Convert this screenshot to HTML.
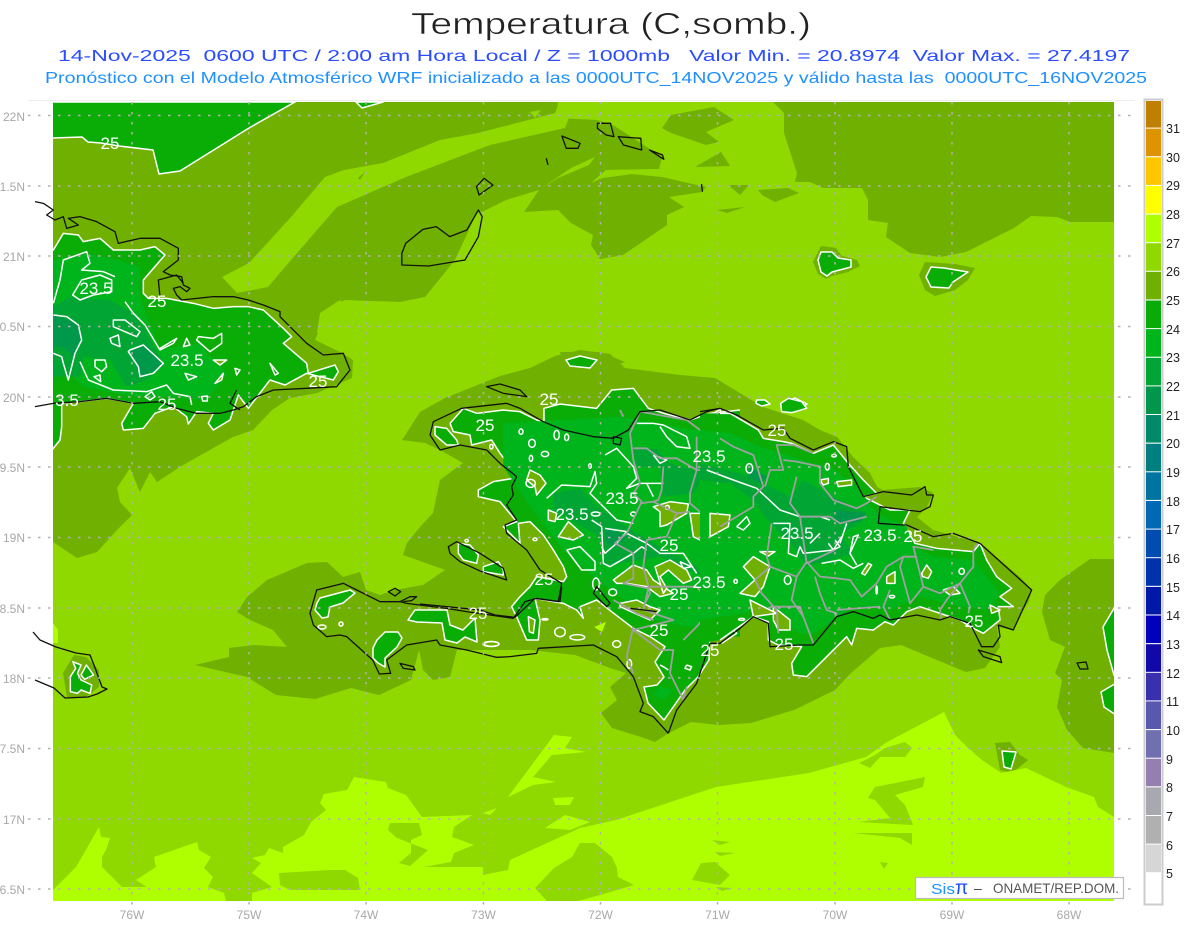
<!DOCTYPE html>
<html><head><meta charset="utf-8"><title>Temperatura</title>
<style>
html,body{margin:0;padding:0;background:#fff;width:1200px;height:927px;overflow:hidden}
svg{display:block;position:absolute;left:0;top:0}
svg *{vector-effect:non-scaling-stroke}
text{font-family:"Liberation Sans",sans-serif}
.w polyline,.w polygon,.w ellipse{stroke:#fff;stroke-width:1.5;stroke-linejoin:round;fill:none}
.f polygon{stroke:none}
.h polygon{fill:#70b000;stroke:none}
.l polygon{fill:#8fd800;stroke:none}
.y polygon{fill:#b0ff00;stroke:none}
.g polygon{fill:#09ad06;stroke:#fff;stroke-width:1.5;stroke-linejoin:round}
.o polygon{fill:#70b000;stroke:#fff;stroke-width:1.5;stroke-linejoin:round}
.b polyline{fill:none;stroke:#a0a0a0;stroke-width:1.8;stroke-linejoin:round}
.k polyline,.k polygon{fill:none;stroke:#111;stroke-width:1.3;stroke-linejoin:round}
.t text{fill:#fff;font-size:17px;text-anchor:middle}
.la text{fill:#a8a8a8;font-size:12px;text-anchor:end}
.lo text{fill:#a8a8a8;font-size:12px;text-anchor:middle}
.n text{fill:#222;font-size:12.5px}
</style></head><body>
<svg width="1200" height="927" viewBox="0 0 1200 927" xmlns="http://www.w3.org/2000/svg">
<defs><clipPath id="m"><rect x="53" y="102" width="1061" height="799"/></clipPath></defs>

<text x="411" y="34" font-size="31" fill="#222" stroke="#fff" stroke-width=".5" textLength="400" lengthAdjust="spacingAndGlyphs">Temperatura (C,somb.)</text>
<text x="58" y="61" font-size="16" fill="#2b4cff" textLength="1072" lengthAdjust="spacingAndGlyphs" xml:space="preserve">14-Nov-2025  0600 UTC / 2:00 am Hora Local / Z = 1000mb   Valor Min. = 20.8974  Valor Max. = 27.4197</text>
<text x="45" y="83" font-size="16" fill="#1e90ff" textLength="1102" lengthAdjust="spacingAndGlyphs" xml:space="preserve">Pronóstico con el Modelo Atmosférico WRF inicializado a las 0000UTC_14NOV2025 y válido hasta las  0000UTC_16NOV2025</text>

<line x1="28" y1="100.5" x2="1135" y2="100.5" stroke="#eee"/>

<g clip-path="url(#m)">
<rect x="53" y="102" width="1061" height="799" fill="#8fd800"/>

<!-- 25-26 band -->
<g class="h">
<polygon points="53,102 558,102 556,118 597,120 613,125 662,157 659,169 606,170 591,183 602,178 632,174 662,177 706,187 702,192 669,197 684,207 667,215 667,225 623,255 600,259 591,245 593,235 571,223 558,210 524,212 539,190 506,200 482,212 478,210 455,260 425,297 400,302 345,300 322,312 318,333 315,340 340,352 353,360 352,378 317,393 290,398 272,410 253,430 233,437 183,465 157,482 150,472 140,492 130,468 117,488 120,502 132,515 117,530 97,552 77,558 53,542"/>
<polygon points="773,102 784,113 784,133 797,173 795,182 810,182 823,188 862,188 868,200 868,220 888,223 886,237 910,253 940,257 966,252 1014,228 1031,216 1057,217 1070,222 1114,222 1114,102"/>
<polygon points="671,115 714,107 734,120 706,132 719,142 706,145 671,133 662,128"/>
<polygon points="695,167 721,152 730,166"/>
<polygon points="758,190 788,188 799,193 775,202 762,195"/>
<polygon points="728,185 749,185 740,195"/>
<polygon points="717,210 745,207 727,213"/>
<!-- Hispaniola halo -->
<polygon points="402,440 420,412 445,398 470,388 500,376 530,368 555,356 580,350 610,354 625,368 680,375 715,378 740,393 763,407 803,420 820,430 837,437 853,457 870,473 877,487 883,490 920,487 933,493 927,507 917,517 933,530 980,543 1020,577 1032,590 1028,603 1017,620 1013,630 997,627 1000,647 985,668 966,672 937,660 901,645 880,648 851,673 835,690 794,710 751,723 719,725 691,722 669,733 655,742 641,737 612,728 601,713 617,700 610,687 626,673 610,668 575,655 530,650 480,650 457,650 455,657 450,677 433,680 423,670 419,650 411,680 379,695 351,688 315,699 276,695 247,677 195,665 229,657 229,648 254,645 287,647 273,630 250,620 237,612 247,597 267,580 307,563 327,562 343,577 360,572 366,590 380,595 395,590 423,585 445,570 437,567 403,555 407,543 420,527 433,513 440,480 463,463 440,450 425,443"/>
<!-- east blob -->
<polygon points="1114,559 1090,559 1060,580 1045,595 1042,612 1050,640 1065,647 1055,673 1062,680 1057,707 1067,730 1083,748 1114,753"/>
<!-- Jamaica halo -->
<polygon points="74,655 63,673 67,697 86,697 99,687 99,670 86,657"/>
<!-- island halos -->
<polygon points="821,246 836,248 842,256 857,260 860,266 848,272 832,276 826,279 818,274 813,262"/>
<polygon points="925,262 955,264 975,268 968,280 955,290 935,296 925,290 919,275"/>
<polygon points="560,352 600,352 625,362 600,372 565,370"/>
<polygon points="995,743 1010,742 1020,755 1028,760 1012,773 1000,770"/>
</g>

<!-- light strips in dark -->
<g class="l">
<polygon points="222,277 249,263 291,217 325,177 344,170 383,163 440,140 478,133 555,113 560,102 575,102 565,128 490,145 406,177 337,207 291,260 268,287 237,293"/>
<polygon points="539,190 571,168 595,157 589,165 558,178"/>
<polygon points="530,112 541,110 535,118"/>
<polygon points="591,183 606,170 660,169 662,177 632,174 602,178"/>
<polygon points="340,300 320,313 317,333 338,326 350,310"/>
</g>
<g class="h">
<polygon points="358,178 365,172 360,180"/>
<polygon points="308,245 318,240 312,250"/>
</g>

<!-- lime -->
<g class="y">
<polygon points="53,890 76,867 99,827 101,837 110,838 106,850 102,857 102,867 122,887 147,887 136,880 156,867 154,857 197,842 199,850 211,857 204,868 213,877 208,887 224,893 226,901 53,901"/>
<polygon points="252,901 252,893 272,887 252,873 261,863 252,858 265,855 269,848 283,853 283,847 304,835 311,822 326,810 320,803 324,794 347,790 354,777 386,782 388,788 406,795 422,817 472,815 454,827 452,837 474,845 454,853 451,862 424,867 483,867 483,875 508,870 510,860 547,843 580,828 616,820 716,787 809,773 866,757 887,742 944,712 955,735 967,747 982,760 1001,773 1026,768 1066,787 1094,797 1098,807 1114,817 1114,901"/>
<polygon points="554,735 572,737 565,748 586,752 552,755 533,777 556,782 533,785 508,797"/>
<polygon points="553,798 574,797 570,805 555,805"/>
<polygon points="483,813 497,808 490,815"/>
<polygon points="545,828 565,815 590,822 570,830"/>
<polygon points="53,623 58,630 58,643 53,643"/>
<polygon points="594,627 606,622 602,632"/>
</g>
<g class="l">
<polygon points="399,863 411,853 411,840 422,835 419,823 390,823 388,830 397,838 428,850 410,866"/>
<polygon points="279,873 330,870 345,870 358,878 360,890 290,890 280,885"/>
<polygon points="580,843 595,843 612,857 617,868 618,877 634,885 600,895 578,901 547,901 535,888 554,868 572,857"/>
<polygon points="875,787 925,777 923,787 895,795 905,805 912,822 913,825 858,822 890,818 875,800 868,798"/>
<polygon points="853,833 912,833 912,845 900,838"/>
<polygon points="859,763 875,755 885,748 905,742 912,748 905,757 880,757 870,768"/>
<polygon points="712,840 730,842 720,845"/>
<polygon points="715,852 735,853 720,856"/>
<polygon points="701,863 715,862 730,875 720,885 692,880"/>
<polygon points="716,887 732,888 722,891"/>
<polygon points="880,862 888,863 884,869"/>
</g>

<!-- 25 contour fills: top-left -->
<g class="g">
<polygon points="40,102 40,138 53,138 82,137 88,142 101,143 119,146 153,150 159,174 180,171 249,128 295,102"/>
<polygon points="356,102 362,108 383,102"/>
<polygon points="821,252 832,252 838,258 851,260 851,267 832,272 827,276 821,272 818,260"/>
<polygon points="931,267 944,268 968,272 953,282 949,288 931,287 926,277"/>
<polygon points="566,360 580,356 597,360 590,368 570,366"/>
<polygon points="783,403 795,398 807,404 795,412"/>
<polygon points="1002,751 1016,752 1011,769 1004,767"/>
<polygon points="1118,600 1113,610 1103,627 1107,650 1114,675 1118,680"/>
<polygon points="1118,682 1101,692 1104,707 1113,713 1118,716"/>
<!-- southern peninsula of Haiti -->
<polygon points="317,603 320,598 350,590 355,593 343,603 330,607 328,617 322,618 315,610"/>
<polygon points="373,648 377,640 385,632 398,632 402,638 397,647 385,658 385,667 378,663 373,658"/>
<polygon points="408,620 415,610 447,610 450,625 463,630 475,618 477,642 465,637 457,643 445,640 442,623 417,622"/>
</g>
<g class="w">
<ellipse cx="322" cy="627" rx="4" ry="2"/><ellipse cx="341" cy="624" rx="2" ry="2"/>
<ellipse cx="491" cy="644" rx="8" ry="2.5"/>
</g>

<!-- Cuba -->
<g transform="translate(0 200) scale(.33333)">
<g class="g"><polygon points="120,150 160,150 190,100 235,105 250,125 300,115 340,150 420,150 465,140 495,165 430,240 430,280 445,295 500,295 580,310 640,325 700,320 745,320 790,330 850,385 875,410 850,430 920,490 925,520 1005,495 1015,515 1000,540 920,520 855,555 810,540 745,625 715,585 690,660 640,690 625,670 640,640 590,635 565,672 560,650 520,620 465,640 430,685 370,690 365,670 400,610 320,595 240,605 185,610 185,680 180,720 140,770 120,770"/></g>
<g class="f">
<polygon fill="#00b41c" points="160,180 260,160 350,180 420,200 420,290 440,350 480,450 600,430 640,480 680,520 620,600 500,590 400,590 250,560 190,500 160,450"/>
<polygon fill="#00a534" points="160,320 210,290 330,300 400,340 430,380 490,490 440,540 380,560 330,480 250,470 240,530 160,530"/>
<polygon fill="#00984a" points="160,345 230,370 245,410 220,470 190,440 160,440"/>
<polygon fill="#00984a" points="390,450 440,435 490,500 420,530"/>
</g>
<g class="w">
<polygon points="245,240 300,225 335,240 335,275 280,285 240,300 218,285"/>
<polyline points="160,310 180,240 190,180 260,155 270,190 245,210 310,215 345,230"/>
<polyline points="160,345 200,350 235,375 245,420 225,460 205,540 190,490 185,470 160,460"/>
<polygon points="340,360 375,360 420,395 410,410 340,380"/>
<polygon points="330,415 355,405 360,440 335,430"/>
<polygon points="390,450 430,435 490,490 460,520 420,530 415,500 385,455"/>
<polygon points="285,480 315,480 320,500 305,515 285,500"/>
<polygon points="560,415 570,435 550,440"/>
<polygon points="595,410 640,415 665,400 665,430 630,455 590,420"/>
<polygon points="640,480 680,480 660,495" style="fill:#70b000"/>
<polygon points="555,520 590,530 565,540"/>
<polygon points="645,550 670,520 665,540" style="fill:#70b000"/>
<polygon points="705,505 720,510 710,525"/>
<polygon points="282,530 300,525 302,545"/>
<polyline points="240,485 265,540 340,570 440,575 500,555 520,580 570,590 575,615"/>
<polyline points="375,305 400,340 435,375 480,450 520,430 530,415 480,445"/>
<polygon points="435,590 455,575 465,590 450,600"/>
<polygon points="605,590 622,588 622,603 608,603"/>
<polygon points="810,490 835,520 825,525"/>
</g>
</g>

<!-- Jamaica -->
<g transform="translate(40 640) scale(.357 .33333)">
<g class="g"><polygon points="92,65 100,85 85,110 85,155 105,160 115,150 140,160 145,135 115,120 105,100 115,75"/></g>
<g class="g"><polygon points="130,75 150,105 125,118 115,105"/></g>
</g>

<!-- Hispaniola west -->
<g transform="translate(420 380) scale(.33333)">
<polygon fill="#09ad06" stroke="none" points="90,130 130,85 170,100 250,90 300,95 350,120 372,125 372,85 420,72 530,85 575,30 640,25 685,85 730,100 810,120 870,100 960,90 960,770 870,770 867,840 834,891 795,930 768,969 732,1020 684,969 672,921 711,915 732,891 705,846 735,800 690,770 640,745 575,695 530,660 480,680 490,715 470,690 430,670 345,655 360,720 355,780 320,780 290,710 275,680 300,650 330,620 350,590 430,605 440,590 430,560 400,510 370,465 330,425 295,430 300,490 260,450 250,440 290,425 240,365 175,350 175,330 220,305 280,295 295,280 320,300 345,325 350,345 380,310 360,280 335,258 275,265 240,220 215,180 155,195 150,165 100,155"/>
<g class="w">
<polyline points="90,130 130,85 170,100 250,90 300,95 350,120 372,125 372,85 420,72 530,85 575,30 640,25 685,85 730,100 810,120 870,100 960,90"/>
<polyline points="870,770 867,840 834,891 795,930 768,969 732,1020 684,969 672,921 711,915 732,891 705,846 735,800 690,770 640,745 575,695 530,660 480,680 490,715 470,690 430,670 345,655 360,720 355,780 320,780 290,710 275,680 300,650 330,620 350,590 430,605 440,590 430,560 400,510 370,465 330,425 295,430 300,490 260,450 250,440 290,425 240,365 175,350 175,330 220,305 280,295 295,280 320,300 345,325 350,345 380,310 360,280 335,258 275,265 240,220 215,180 155,195 150,165 100,155 90,130"/>
</g>
<g class="g">
<polygon points="45,140 80,145 110,180 115,195 80,195 45,165"/>
<polygon points="115,490 150,495 175,525 170,550 130,540 115,520"/>
<polygon points="190,560 235,545 250,570 250,585 190,575"/>
</g>
<g class="f">
<polygon fill="#00b41c" points="250,130 600,110 820,150 960,150 960,730 800,740 700,720 600,650 530,600 430,510 330,380 250,260"/>
<polygon fill="#00a534" points="400,340 480,325 530,380 620,440 720,500 830,560 860,590 800,570 720,530 650,540 555,560 540,470 470,430 400,390"/>
<polygon fill="#00a534" points="640,210 710,205 750,250 860,280 820,340 730,350 720,260 650,260"/>
<polygon fill="#00984a" points="555,440 620,470 585,500 560,490"/>
<polygon fill="#00b41c" points="760,930 730,960 700,945 720,920"/>
</g>
<g class="o">
<polygon points="415,470 445,425 490,465 460,480"/>
<polygon points="385,390 410,400 405,425 385,420"/>
<polygon points="700,380 750,365 805,372 800,400 740,435 720,440 720,395"/>
<polygon points="810,400 860,400 890,440 880,470 860,490 820,470"/>
<polygon points="580,600 640,555 680,570 700,600 760,640 720,650 680,620 620,610 590,610"/>
<polygon points="705,560 750,540 800,570 815,600 790,610 745,570 720,590 740,625 730,640"/>
<polygon points="600,670 650,660 690,680 720,690 690,720 600,680"/>
<polygon points="330,270 360,285 378,310 350,345 345,320 320,300"/>
<polygon points="325,710 345,720 340,760 328,755"/>
</g>
<g class="w">
<polyline points="380,355 425,315 510,320 525,275 530,310 510,340 590,420 640,430"/>
<polyline points="555,225 590,205 640,260 650,295 620,325 660,310 680,310 730,310"/>
<polyline points="650,130 700,130 730,135 760,150 800,170 810,205 770,200 740,170 720,140"/>
<polyline points="515,420 545,440 550,550 570,560 640,520 665,500 680,510"/>
<polyline points="555,445 620,455 590,490 555,520 545,500"/>
<polyline points="620,460 680,490 720,520 790,520 830,580"/>
<polyline points="440,510 480,500 525,545 525,570 485,570 440,510"/>
<polyline points="700,225 740,240 720,250 700,225"/>
<polyline points="880,100 900,88 905,105 885,115 880,100"/>
<polyline points="700,350 680,310"/>
<polyline points="905,560 920,640 900,680"/>
<polyline points="870,510 900,530"/>
<polyline points="780,545 815,560 790,565 780,545"/>
<polyline points="890,720 930,740 950,760 905,790"/>
<polyline points="720,855 730,860 745,870"/>
<polyline points="800,855 815,860 810,870 795,865 800,855"/>
<ellipse cx="303" cy="155" rx="6" ry="8"/><ellipse cx="410" cy="165" rx="8" ry="14"/><ellipse cx="440" cy="172" rx="6" ry="10"/>
<ellipse cx="336" cy="190" rx="10" ry="12"/><ellipse cx="375" cy="222" rx="11" ry="8"/><ellipse cx="333" cy="235" rx="5" ry="9"/>
<ellipse cx="214" cy="200" rx="5" ry="7"/><ellipse cx="332" cy="310" rx="14" ry="12"/><ellipse cx="640" cy="402" rx="8" ry="6"/>
<ellipse cx="742" cy="382" rx="6" ry="6"/><ellipse cx="420" cy="756" rx="16" ry="14"/><ellipse cx="472" cy="772" rx="22" ry="8"/>
<ellipse cx="590" cy="792" rx="12" ry="10"/><ellipse cx="215" cy="792" rx="22" ry="7"/><ellipse cx="345" cy="478" rx="6" ry="4"/>
<ellipse cx="140" cy="482" rx="5" ry="4"/><ellipse cx="527" cy="402" rx="13" ry="6"/><ellipse cx="578" cy="637" rx="12" ry="10"/>
<ellipse cx="528" cy="612" rx="10" ry="18"/><ellipse cx="628" cy="852" rx="7" ry="13"/><ellipse cx="878" cy="320" rx="6" ry="5"/>
<ellipse cx="510" cy="258" rx="4" ry="7"/><ellipse cx="375" cy="718" rx="9" ry="2"/>
</g>
<g class="b">
<polyline points="660,95 630,160 640,240 660,310 640,340 665,365 620,460 585,490 640,520 640,595 610,610 685,625 670,690"/>
<polyline points="640,740 620,830 640,880"/>
<polyline points="640,205 680,205 720,235 770,235 830,270 870,270 930,240"/>
<polyline points="730,260 725,330 715,360 700,365 660,370"/>
<polyline points="830,170 830,270 810,340 810,370 880,430 890,470 960,470"/>
<polyline points="700,365 770,400 810,395"/>
<polyline points="770,400 740,470 680,480 670,560 690,640 670,680"/>
<polyline points="670,690 760,720 640,750 720,810 760,810 750,880"/>
<polyline points="880,680 830,740 790,780"/>
<polyline points="880,680 900,620 890,560 930,480"/>
<polyline points="880,680 830,620 690,620"/>
<polyline points="930,240 930,430 960,440"/>
<polyline points="660,95 800,120 840,150 960,110"/>
<polyline points="600,90 610,110"/>
<polyline points="580,660 650,700 700,720"/>
<polyline points="750,880 790,960 800,920"/>
</g>
</g>

<!-- Hispaniola east -->
<g transform="translate(720 380) scale(.33333)">
<polygon fill="#09ad06" stroke="none" points="-60,100 30,100 115,150 130,175 190,185 215,190 280,220 340,195 385,250 430,300 470,340 430,350 510,390 570,390 550,430 585,490 650,505 760,515 780,490 800,540 830,590 875,625 840,650 880,680 835,680 840,720 790,760 750,740 720,720 600,680 560,695 520,735 495,725 460,750 410,745 395,795 380,770 330,820 260,890 220,885 215,850 245,800 175,795 145,780 145,725 100,710 50,745 0,780 -60,790"/>
<g class="w">
<polyline points="0,100 30,100 115,150 130,175 190,185 215,190 280,220 340,195 385,250 430,300 470,340 430,350 510,390 570,390 550,430 585,490 650,505 760,515 780,490 800,540 830,590 875,625 840,650 880,680 835,680 840,720 790,760 750,740 720,720 600,680 560,695 520,735 495,725 460,750 410,745 395,795 380,770 330,820 260,890 220,885 215,850 245,800 175,795 145,780 145,725 100,710 50,745 0,780"/>
</g>
<g class="g">
<polygon points="110,60 135,60 150,72 125,78 108,70"/>
<polygon points="182,70 205,55 245,65 260,85 215,98 185,95"/>
</g>
<g class="f">
<polygon fill="#00b41c" points="-60,150 30,160 120,200 280,250 330,260 420,330 470,400 560,440 580,500 640,530 760,540 800,590 840,640 800,690 720,680 600,650 510,690 400,680 280,760 240,760 120,680 70,700 -60,720"/>
<polygon fill="#00a534" points="-60,250 60,280 130,310 210,350 250,300 340,350 440,400 420,430 360,460 400,520 330,540 260,560 220,500 150,430 100,360 30,310 -60,300"/>
<polygon fill="#00984a" points="340,390 440,400 420,425 350,430"/>
<polygon fill="#00984a" points="90,260 140,290 125,310 80,290"/>
</g>
<g class="o">
<polygon points="100,530 150,560 130,620 105,650 60,640 105,600 70,560"/>
<polygon points="160,680 210,720 210,750 175,750 160,720"/>
<polygon points="-30,400 30,405 25,440 -30,470"/>
<polygon points="90,660 130,680 170,700 100,710"/>
<polygon points="300,300 325,295 325,310 310,315"/>
<polygon points="350,305 395,300 395,315 355,320"/>
<polygon points="810,675 840,690 815,700"/>
<polygon points="425,580 445,550 455,555 435,585"/>
<polygon points="500,590 525,575 525,610 500,610"/>
<polygon points="605,580 620,555 635,575 625,595 608,590"/>
<polygon points="670,630 700,620 720,640 690,645"/>
<polygon points="120,515 165,515 145,528"/>
</g>
<g class="w">
<polyline points="-40,270 40,300 110,325 180,390 240,410 300,410 330,420"/>
<polyline points="160,430 210,430 205,520 230,530 240,500 250,520 340,510 365,470"/>
<polyline points="270,490 300,460"/>
<polyline points="380,430 360,490"/>
<polyline points="345,480 360,500 340,510 325,490"/>
<polyline points="305,550 360,540 400,565 430,550"/>
<polyline points="390,520 400,470 415,465 390,520 410,555"/>
<polyline points="50,440 80,410 90,430 70,450 50,440"/>
<ellipse cx="342" cy="227" rx="7" ry="4"/><ellipse cx="322" cy="260" rx="6" ry="10"/><ellipse cx="88" cy="265" rx="10" ry="14"/>
<ellipse cx="203" cy="600" rx="10" ry="13"/><ellipse cx="47" cy="604" rx="5" ry="6"/><ellipse cx="65" cy="718" rx="9" ry="3"/>
<ellipse cx="516" cy="650" rx="8" ry="4"/><ellipse cx="470" cy="630" rx="2" ry="12"/><ellipse cx="725" cy="574" rx="8" ry="9"/>
</g>
<g class="b">
<polyline points="0,175 40,200 100,225 130,320 100,350 100,380 50,410 0,440"/>
<polyline points="135,320 150,270 190,270 170,195 220,195 280,220"/>
<polyline points="190,240 230,245 300,260 300,310 340,360 410,385 440,370 470,350"/>
<polyline points="230,290 210,370 240,410 330,410 360,430 440,410"/>
<polyline points="240,410 260,550 345,510"/>
<polyline points="155,430 140,530 150,560 105,600"/>
<polyline points="150,560 230,590 260,545 300,590 350,595 390,600 425,650 470,610 500,560 550,530 590,530"/>
<polyline points="550,530 540,560 570,670 610,620 590,540 580,500 640,510"/>
<polyline points="610,620 660,640 720,610 750,680 745,700"/>
<polyline points="720,610 680,660 660,690 665,720"/>
<polyline points="760,510 770,490"/>
<polyline points="760,510 760,560 720,610"/>
<polyline points="285,590 300,640 320,690 350,700 345,710"/>
<polyline points="350,690 480,680"/>
<polyline points="230,590 215,660 250,710 280,790"/>
<polyline points="150,680 240,680 250,710"/>
<polyline points="105,600 125,640 170,690 175,760"/>
<polyline points="510,630 490,680 510,720"/>
</g>
</g>
</g>

<!-- Coast lines -->
<g class="k">
<g transform="translate(0 200) scale(.33333)">
<polyline points="105,5 130,10 160,30 140,45 165,60 190,50 200,85 235,75 205,55 240,50 290,65 345,95 355,130 420,115 480,115 535,145 535,180 490,215 510,225 545,230 550,255 570,265 560,275 540,260 520,265 530,285 545,300 640,290 700,290 745,300 790,315 840,335 840,350 890,400 920,430 970,465 1030,460 1050,510 1010,560 920,565 820,570 770,590 730,620 700,630 660,640 590,640 530,625 480,605 400,610 320,595 240,605 160,610 105,620"/>
<polyline points="480,290 475,240 530,225 550,250"/>
<polyline points="710,570 690,610 720,630"/>
</g>
<polyline points="33,632 40,640 56,647 76,653 90,655 94,665 102,687 107,689 97,694 88,697 65,698 54,688 35,680"/>
<g transform="translate(420 380) scale(.33333)">
<polyline points="30,165 40,125 125,85 260,70 300,85 370,125 430,150 520,170 580,175 625,150 660,95 720,90 810,120 860,95 900,85"/>
<polyline points="290,290 275,320 280,345 260,375 290,420 255,435 260,460 320,510 360,570 425,610 415,665 345,655 285,712 225,705 180,690 80,680 0,672"/>
<polyline points="290,290 240,250 200,210 120,195 60,210 30,165"/>
<polygon points="85,500 110,485 180,520 250,565 260,600 185,575 120,545 90,520"/>
<polygon points="200,20 240,12 300,30 320,50 250,40"/>
<polygon points="520,640 560,680 570,670 530,620"/>
<polyline points="630,685 710,695"/>
<polygon points="580,170 605,175 600,195 580,190"/>
</g>
<g transform="translate(720 380) scale(.33333)">
<polyline points="-60,95 0,85 50,105 130,150 190,145 210,175 280,210 340,185 380,200 385,260 430,350 490,335 575,345 615,320 620,345 640,345 630,380 600,395 480,380 475,430 545,435 560,435 640,470 700,460 780,490 935,630 880,750 835,735 840,770 820,800 785,800 750,730 690,710 660,720 590,705 510,720 480,705 460,715 400,695 350,710 280,795 240,795 150,800 145,730 100,710 60,745 0,790 -30,790"/>
<polygon points="775,810 840,830 845,848 790,830"/>
</g>
<g transform="translate(300 570) scale(.33333)">
<polyline points="1105,490 1060,440 1020,425 1030,400 1015,360 1000,320 950,260 880,225 715,235 710,250 630,260 590,262 500,240 420,225 410,210 320,225 260,270 272,310 238,312 218,270 140,200 120,195 80,200 40,165 30,130 50,60 130,40 170,60 240,95 300,95 320,100 440,115 500,125 640,145 675,95 710,85 780,95 785,50"/>
<polyline points="1105,490 1130,420 1190,340 1230,220"/>
<polygon points="300,280 340,290 345,300 310,295"/>
<polygon points="265,65 285,55 302,65 285,78"/>
<polyline points="300,95 330,80 350,80 335,92 310,95"/>
</g>
<g transform="scale(.3827 .33333)">
<polygon points="1050,760 1060,730 1105,688 1140,680 1175,710 1220,690 1250,630 1260,650 1250,710 1215,780 1120,798 1050,795"/>
<polygon points="1245,560 1265,535 1288,555 1252,585"/>
</g>
<g transform="translate(450 100) scale(.4337 .33333)">
<polygon points="258,108 300,130 295,145 268,145"/>
<polygon points="340,70 370,70 378,110 360,105 340,85"/>
<polygon points="388,110 440,115 442,150 400,135"/>
<polygon points="460,150 490,165 493,178"/>
<polyline points="222,175 226,195"/>
<polyline points="580,252 582,275"/>
</g>
<polygon points="1077,663 1086,662 1088,669 1080,669"/>
</g>

<!-- Grid -->
<g stroke="#b4b0b0" stroke-width="1.5" stroke-dasharray="2.5 7.5" fill="none">
<path d="M28 115.5H1135M28 186H1135M28 256H1135M28 326.5H1135M28 397H1135M28 467H1135M28 537.5H1135M28 608H1135M28 678H1135M28 748.5H1135M28 819H1135M28 889H1135"/>
<path d="M132 102V906M249 102V906M366 102V906M483.5 102V906M600.5 102V906M717.5 102V906M835 102V906M952 102V906M1069 102V906"/>
</g>

<!-- Contour labels -->
<g class="t">
<text x="110" y="149">25</text><text x="157" y="307">25</text><text x="318" y="387">25</text><text x="167" y="410">25</text>
<text x="549" y="405">25</text><text x="485" y="431">25</text><text x="777" y="436">25</text><text x="544" y="585">25</text>
<text x="478" y="619">25</text><text x="669" y="551">25</text><text x="679" y="600">25</text><text x="659" y="636">25</text>
<text x="710" y="656">25</text><text x="784" y="650">25</text><text x="974" y="627">25</text><text x="913" y="542">25</text>
<text x="96" y="294">23.5</text><text x="187" y="366">23.5</text><text x="709" y="462">23.5</text><text x="622" y="504">23.5</text>
<text x="572" y="520">23.5</text><text x="797" y="539">23.5</text><text x="880" y="541">23.5</text><text x="709" y="588">23.5</text>
<text x="67" y="406">3.5</text>
</g>

<!-- Axis labels -->
<g class="la">
<text x="25" y="121" font-size="12">22N</text><text x="25" y="191">1.5N</text><text x="25" y="261">21N</text><text x="25" y="331">0.5N</text>
<text x="25" y="402">20N</text><text x="25" y="472">9.5N</text><text x="25" y="542">19N</text><text x="25" y="613">8.5N</text>
<text x="25" y="683">18N</text><text x="25" y="753">7.5N</text><text x="25" y="824">17N</text><text x="25" y="894">6.5N</text>
</g>
<g class="lo">
<text x="132" y="919">76W</text><text x="249" y="919">75W</text><text x="366" y="919">74W</text><text x="483.5" y="919">73W</text>
<text x="600.5" y="919">72W</text><text x="717.5" y="919">71W</text><text x="835" y="919">70W</text><text x="952" y="919">69W</text><text x="1069" y="919">68W</text>
</g>

<!-- Legend box -->
<rect x="915.5" y="877.5" width="208" height="21" fill="#fff" stroke="#bbb" stroke-width="1.2"/>
<text x="931" y="894" font-size="15" fill="#1e90ff" textLength="24" lengthAdjust="spacingAndGlyphs">Sis</text>
<text x="955" y="894" font-size="19" fill="#1a4cff">π</text>
<text x="974" y="893" font-size="14" fill="#444">–</text>
<text x="993" y="893" font-size="14" fill="#555" textLength="126" lengthAdjust="spacingAndGlyphs">ONAMET/REP.DOM.</text>

<!-- Colorbar -->
<rect x="1144.5" y="99.5" width="18" height="805" fill="#fff" stroke="#ccc" stroke-width="2"/>
<g>
<rect x="1146" y="101" width="15" height="26.6" fill="#bf7f00"/>
<rect x="1146" y="128.6" width="15" height="27.6" fill="#dd9400"/>
<rect x="1146" y="157.3" width="15" height="27.6" fill="#ffc600"/>
<rect x="1146" y="185.9" width="15" height="27.6" fill="#ffff00"/>
<rect x="1146" y="214.6" width="15" height="27.6" fill="#b0ff00"/>
<rect x="1146" y="243.2" width="15" height="27.6" fill="#90d800"/>
<rect x="1146" y="271.8" width="15" height="27.6" fill="#70b000"/>
<rect x="1146" y="300.5" width="15" height="27.6" fill="#08ab08"/>
<rect x="1146" y="329.1" width="15" height="27.6" fill="#00b41c"/>
<rect x="1146" y="357.8" width="15" height="27.6" fill="#00a536"/>
<rect x="1146" y="386.4" width="15" height="27.6" fill="#00974c"/>
<rect x="1146" y="415" width="15" height="27.6" fill="#008a68"/>
<rect x="1146" y="443.7" width="15" height="27.6" fill="#007f80"/>
<rect x="1146" y="472.3" width="15" height="27.6" fill="#0074a0"/>
<rect x="1146" y="501" width="15" height="27.6" fill="#0068b4"/>
<rect x="1146" y="529.6" width="15" height="27.6" fill="#004cb0"/>
<rect x="1146" y="558.2" width="15" height="27.6" fill="#0032ac"/>
<rect x="1146" y="586.9" width="15" height="27.6" fill="#0018a8"/>
<rect x="1146" y="615.5" width="15" height="27.6" fill="#0000bc"/>
<rect x="1146" y="644.2" width="15" height="27.6" fill="#1008a8"/>
<rect x="1146" y="672.8" width="15" height="27.6" fill="#3830ac"/>
<rect x="1146" y="701.4" width="15" height="27.6" fill="#5858b0"/>
<rect x="1146" y="730.1" width="15" height="27.6" fill="#7070b0"/>
<rect x="1146" y="758.7" width="15" height="27.6" fill="#9480b0"/>
<rect x="1146" y="787.4" width="15" height="27.6" fill="#a8a8b0"/>
<rect x="1146" y="816" width="15" height="27.6" fill="#b0b0b0"/>
<rect x="1146" y="844.6" width="15" height="27.6" fill="#d6d6d6"/>
<rect x="1146" y="873.3" width="15" height="29.7" fill="#ffffff"/>
</g>
<g class="n">
<text x="1166" y="133">31</text><text x="1166" y="162">30</text><text x="1166" y="190">29</text><text x="1166" y="219">28</text>
<text x="1166" y="248">27</text><text x="1166" y="276">26</text><text x="1166" y="305">25</text><text x="1166" y="334">24</text>
<text x="1166" y="362">23</text><text x="1166" y="391">22</text><text x="1166" y="420">21</text><text x="1166" y="448">20</text>
<text x="1166" y="477">19</text><text x="1166" y="506">18</text><text x="1166" y="534">17</text><text x="1166" y="563">16</text>
<text x="1166" y="592">15</text><text x="1166" y="620">14</text><text x="1166" y="649">13</text><text x="1166" y="678">12</text>
<text x="1166" y="706">11</text><text x="1166" y="735">10</text><text x="1166" y="764">9</text><text x="1166" y="792">8</text>
<text x="1166" y="821">7</text><text x="1166" y="850">6</text><text x="1166" y="878">5</text>
</g>
</svg>
</body></html>
